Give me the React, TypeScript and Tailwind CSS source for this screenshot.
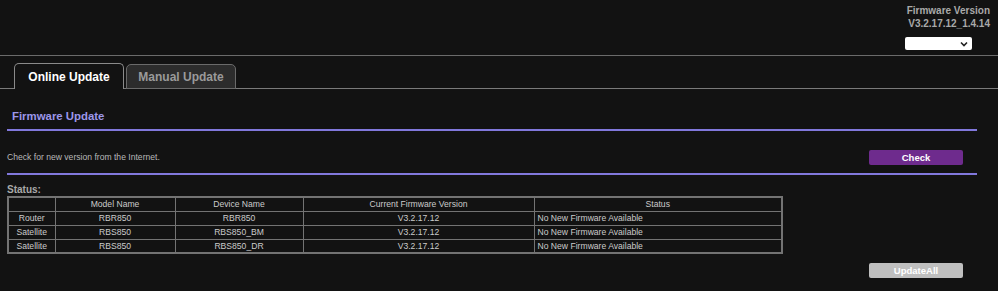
const rows = [
  { role: "Router", model: "RBR850", device: "RBR850", version: "V3.2.17.12", status: "No New Firmware Available" },
  { role: "Satellite", model: "RBS850", device: "RBS850_BM", version: "V3.2.17.12", status: "No New Firmware Available" },
  { role: "Satellite", model: "RBS850", device: "RBS850_DR", version: "V3.2.17.12", status: "No New Firmware Available" },
];

const cell = "border border-[#737373] h-[14px] px-[3px] leading-[12px]";

export default function App() {
  return (
    <div className="w-[998px] h-[291px] bg-[#121212] font-['Liberation_Sans',Arial,sans-serif] overflow-hidden">
      {/* Top bar */}
      <div className="h-[56px] border-b border-[#6b6b6b] flex flex-col items-end pr-[8px] pt-[4px]">
        <div className="text-[10px] leading-[13px] font-bold text-[#a9a9a9] text-right">
          <div>Firmware Version</div>
          <div>V3.2.17.12_1.4.14</div>
        </div>
        <div className="mt-[7px] mr-[18px] w-[67px] h-[13px] bg-white rounded-[2px] flex items-center justify-end pr-[4px]">
          <svg width="8" height="6" viewBox="0 0 8 6">
            <path d="M1 1.5 L4 4.5 L7 1.5" stroke="#222" strokeWidth="1.6" fill="none" />
          </svg>
        </div>
      </div>

      {/* Tabs */}
      <div className="mt-[7px] h-[26px] border-b border-[#7a7a7a] flex items-end pl-[14px]">
        <div className="w-[110px] h-[26px] border border-b-0 border-[#8a8a8a] rounded-t-[5px] bg-[#121212] flex items-center justify-center text-[12px] font-bold text-white -mb-px">
          Online Update
        </div>
        <div className="ml-[2px] w-[110px] h-[25px] border border-[#6a6a6a] rounded-t-[5px] bg-[#2c2c2c] flex items-center justify-center text-[12px] font-bold text-[#9a9a9a] -mb-px">
          Manual Update
        </div>
      </div>

      <div className="ml-[7px] w-[970px]">
        <div className="h-[40px] flex items-center pl-[5px] pt-[16px] text-[11.4px] font-bold text-[#9c97ea]">
          Firmware Update
        </div>
        <div className="h-[2px] bg-[#8178dc]" />

        <div className="h-[42px] flex items-center justify-between pt-[14px] pb-[3px]">
          <span className="text-[8.6px] text-[#b8b8b8]">Check for new version from the Internet.</span>
          <button className="mr-[14px] w-[94px] h-[15px] rounded-[2px] bg-[#6e2b8d] text-white text-[9.5px] font-bold leading-[15px]">
            Check
          </button>
        </div>
        <div className="h-[2px] bg-[#8178dc]" />

        <div className="pt-[8px] text-[10px] leading-[13px] font-bold text-[#a9a9a9]">Status:</div>

        <table className="border-collapse border-2 border-[#737373] text-[8.6px] text-[#cbcbcb] w-[774px] table-fixed">
          <colgroup>
            <col className="w-[47px]" />
            <col className="w-[120px]" />
            <col className="w-[128px]" />
            <col className="w-[231px]" />
            <col className="w-[248px]" />
          </colgroup>
          <thead>
            <tr>
              <th className={cell + " font-normal"}></th>
              <th className={cell + " font-normal text-center"}>Model Name</th>
              <th className={cell + " font-normal text-center"}>Device Name</th>
              <th className={cell + " font-normal text-center"}>Current Firmware Version</th>
              <th className={cell + " font-normal text-center"}>Status</th>
            </tr>
          </thead>
          <tbody>
            {rows.map((r, i) => (
              <tr key={i}>
                <td className={cell + " text-center"}>{r.role}</td>
                <td className={cell + " text-center"}>{r.model}</td>
                <td className={cell + " text-center"}>{r.device}</td>
                <td className={cell + " text-center"}>{r.version}</td>
                <td className={cell + " text-left"}>{r.status}</td>
              </tr>
            ))}
          </tbody>
        </table>

        <div className="flex justify-end mt-[9px]">
          <button className="mr-[14px] w-[94px] h-[15px] rounded-[2px] bg-[#bfbfbf] text-white text-[9.5px] font-bold leading-[15px]">
            UpdateAll
          </button>
        </div>
      </div>
    </div>
  );
}
